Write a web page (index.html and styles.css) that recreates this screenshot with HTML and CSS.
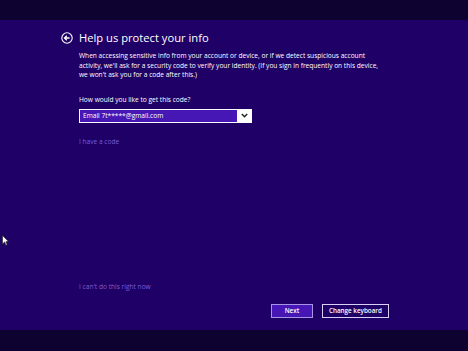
FILE: index.html
```html
<!DOCTYPE html>
<html>
<head>
    <title>Help us protect your info</title>
    <link rel="stylesheet" href="styles.css">
</head>
<body>
    <div class="top-bar"></div>

    <div class="page">
        <div class="title-row">
            <svg class="back-icon" width="12" height="12" viewBox="0 0 12 12">
                <circle cx="6" cy="6" r="5.2" fill="none" stroke="#ffffff" stroke-width="1.1"/>
                <path d="M8.6 6 H3.8 M5.8 3.8 L3.5 6 L5.8 8.2" fill="none" stroke="#ffffff" stroke-width="1.3"/>
            </svg>
            <h1>Help us protect your info</h1>
        </div>

        <div class="content">
            <p class="intro">When accessing sensitive info from your account or device, or if we detect suspicious account<br>
                activity, we'll ask for a security code to verify your identity. (If you sign in frequently on this device,<br>
                we won't ask you for a code after this.)</p>

            <label class="field-label">How would you like to get this code?</label>
            <div class="select">
                <span class="select-value">Email 7t*****@gmail.com</span>
                <span class="select-arrow">
                    <svg width="7" height="5" viewBox="0 0 7 5">
                        <path d="M0.8 1 L3.5 3.8 L6.2 1" fill="none" stroke="#222222" stroke-width="1.4"/>
                    </svg>
                </span>
            </div>

            <a class="link" href="#">I have a code</a>
        </div>

        <div class="footer">
            <a class="link" href="#">I can't do this right now</a>
            <div class="button_groups">
                <button class="btn btn-primary" type="button">Next</button>
                <button class="btn" type="button">Change keyboard</button>
            </div>
        </div>

        <svg class="cursor" width="7" height="11" viewBox="0 0 7 11">
            <path d="M0.5 0.5 V9 L2.6 7 L4 10.2 L5.2 9.7 L3.9 6.6 L6.5 6.6 Z" fill="#ffffff" stroke="#222222" stroke-width="0.6"/>
        </svg>
    </div>

    <div class="bottom-bar"></div>
</body>
</html>
```

FILE: styles.css
```css
body {
    margin: 0;
    background: #0e0330;
    font-family: 'Open Sans', 'Noto Sans', sans-serif;
    color: #ffffff;
}

.top-bar {  height: 20px;  }

.bottom-bar {  height: 21px;  }

.page {
    position: relative;
    height: 310px;
    box-sizing: border-box;
    background: #1f0067;
    padding: 11px 79px 12px 61px;
    display: flex;
    flex-direction: column;
}

.title-row {
    display: flex;
    align-items: center;
    gap: 6px;
    height: 14px;
}

.back-icon {  flex: none;  }

h1 {
    margin: 0;
    font-size: 11.2px;
    font-weight: 400;
    line-height: 14px;
}

.content {
    margin-left: 18px;
    display: flex;
    flex-direction: column;
    align-items: flex-start;
}

.intro {
    margin: 6px 0 0;
    font-size: 6.6px;
    line-height: 9.5px;
    white-space: nowrap;
}

.field-label {
    margin-top: 15px;
    font-size: 6.6px;
    line-height: 9px;
}

.select {
    margin-top: 5px;
    width: 173px;
    height: 14px;
    box-sizing: border-box;
    border: 1px solid #ffffff;
    display: flex;
}

.select-value {
    flex: 1;
    background: #4617b4;
    font-size: 6.6px;
    line-height: 12px;
    padding-left: 3px;
}

.select-arrow {
    width: 14px;
    background: #ffffff;
    display: flex;
    align-items: center;
    justify-content: center;
}

.link {
    color: #7a5fd4;
    text-decoration: none;
    font-size: 6.6px;
    line-height: 9px;
}

.content .link {  margin-top: 14px;  }

.footer {
    margin-top: auto;
    margin-left: 18px;
    display: flex;
    flex-direction: column;
}

.button_groups {
    margin-top: 13px;
    display: flex;
    justify-content: flex-end;
    gap: 9px;
}

.btn {
    height: 14px;
    padding: 0 6px;
    background: #1f0067;
    border: solid 1px #d8d0f4;
    color: #ffffff;
    font-family: 'Open Sans', 'Noto Sans', sans-serif;
    font-size: 6.3px;
    font-weight: 600;
    line-height: 12px;
}

.btn-primary {
    width: 42px;
    background: #4617b4;
    border-color: #a894e6;
}

.cursor {
    position: absolute;
    left: 2px;
    top: 215px;
}
```
